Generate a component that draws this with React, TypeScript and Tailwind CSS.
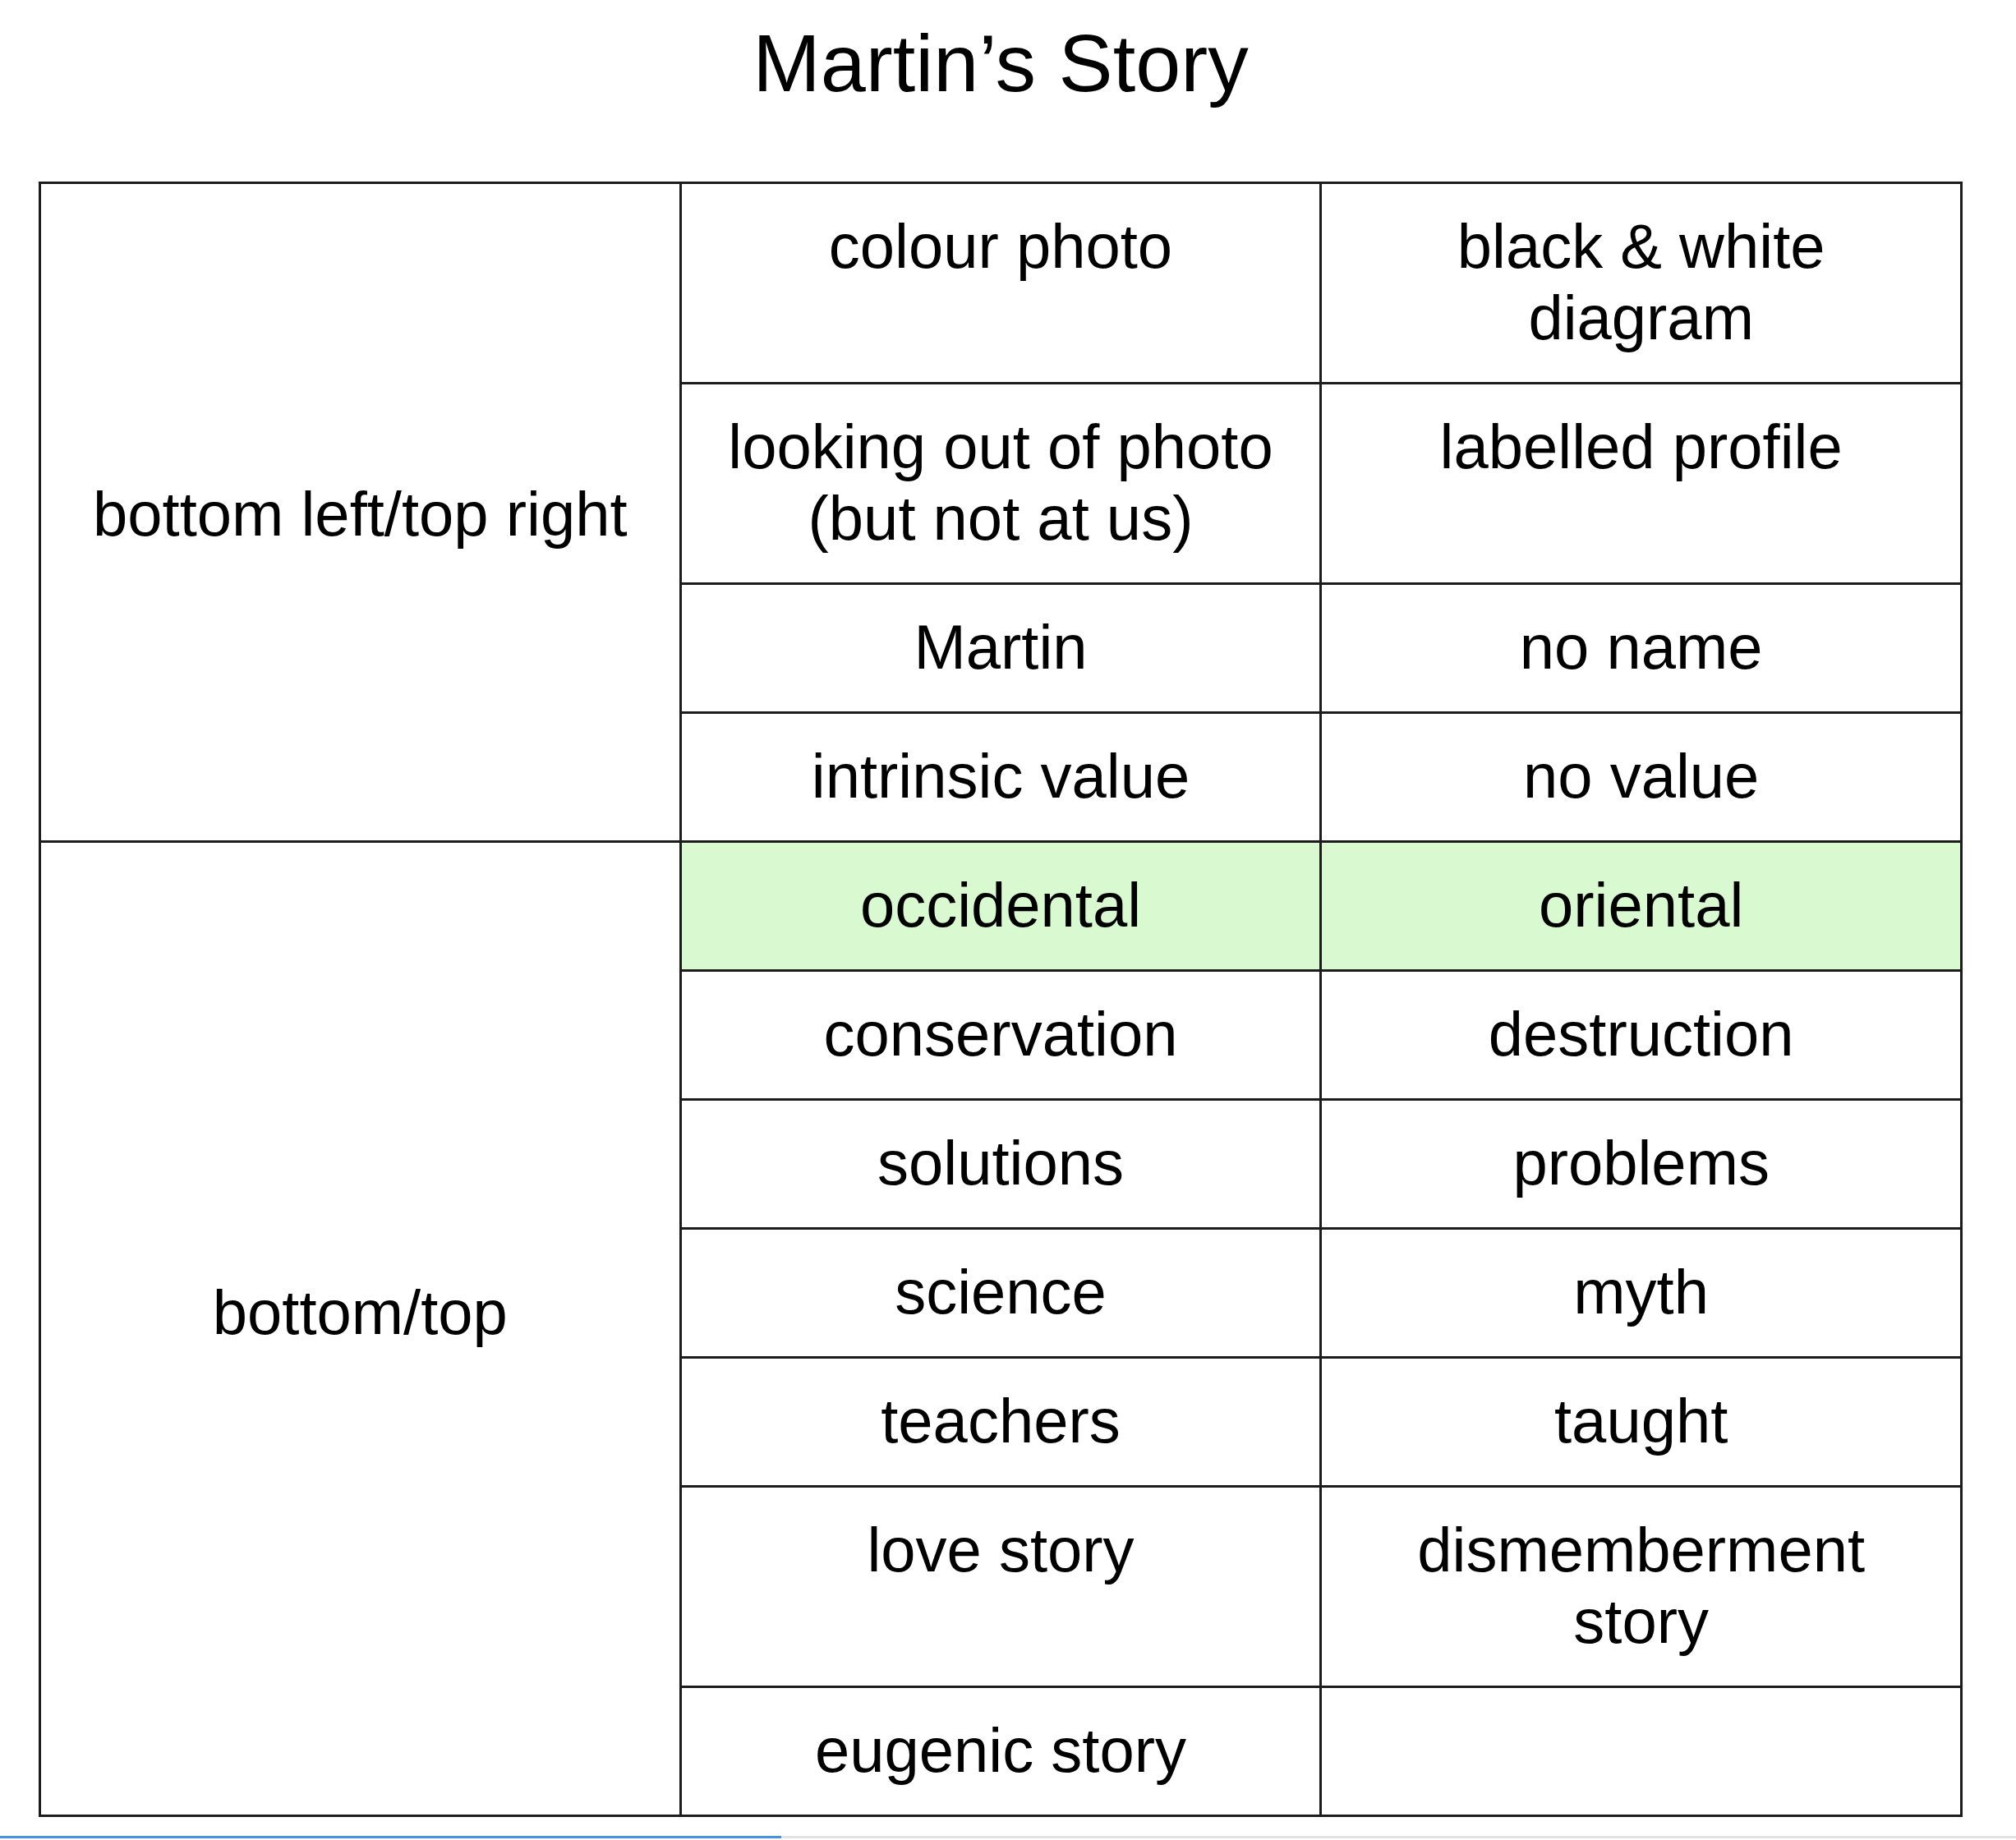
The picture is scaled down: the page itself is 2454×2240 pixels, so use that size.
const pairs: [string, string, boolean?][] = [
  ["colour photo", "black & white\ndiagram"],
  ["looking out of photo\n(but not at us)", "labelled profile"],
  ["Martin", "no name"],
  ["intrinsic value", "no value"],
  ["occidental", "oriental", true],
  ["conservation", "destruction"],
  ["solutions", "problems"],
  ["science", "myth"],
  ["teachers", "taught"],
  ["love story", "dismemberment\nstory"],
  ["eugenic story", ""],
];

function Cell({ text, green }: { text: string; green?: boolean }) {
  return (
    <div
      className={
        "border-r-[3px] border-b-[3px] border-[#1c1c1c] pt-[32px] pb-[35px] px-4 text-center whitespace-pre-line " +
        (green ? "bg-[#d9fad0]" : "bg-white")
      }
    >
      {text || "\u00a0"}
    </div>
  );
}

export default function App() {
  return (
    <div className="min-h-[2240px] bg-white text-black font-['Liberation_Sans',Arial,sans-serif]">
      <h1 className="pt-[20px] text-[99px] leading-[1.15] text-center w-[2342px] ml-[47px]">
        Martin’s Story
      </h1>

      <div className="mt-[87px] ml-[47px] w-[2342px] grid grid-cols-3 border-l-[3px] border-t-[3px] border-[#1c1c1c] text-[76px] leading-[87px]">
        <div className="row-span-4 border-r-[3px] border-b-[3px] border-[#1c1c1c] flex flex-col justify-center items-center pt-[4px] px-4 text-center">
          bottom left/top right
        </div>
        {pairs.slice(0, 4).map(([a, b], i) => (
          <div key={i} className="contents">
            <Cell text={a} />
            <Cell text={b} />
          </div>
        ))}
        <div className="row-span-7 border-r-[3px] border-b-[3px] border-[#1c1c1c] flex flex-col justify-center items-center pb-[40px] px-4 text-center">
          bottom/top
        </div>
        {pairs.slice(4).map(([a, b, g], i) => (
          <div key={i} className="contents">
            <Cell text={a} green={g} />
            <Cell text={b} green={g} />
          </div>
        ))}
      </div>

      <div className="mt-[23px] flex h-[3px]">
        <div className="w-[951px] bg-[#4a8fe7]" />
        <div className="flex-1 bg-[#e2e2e2]" />
      </div>
    </div>
  );
}
